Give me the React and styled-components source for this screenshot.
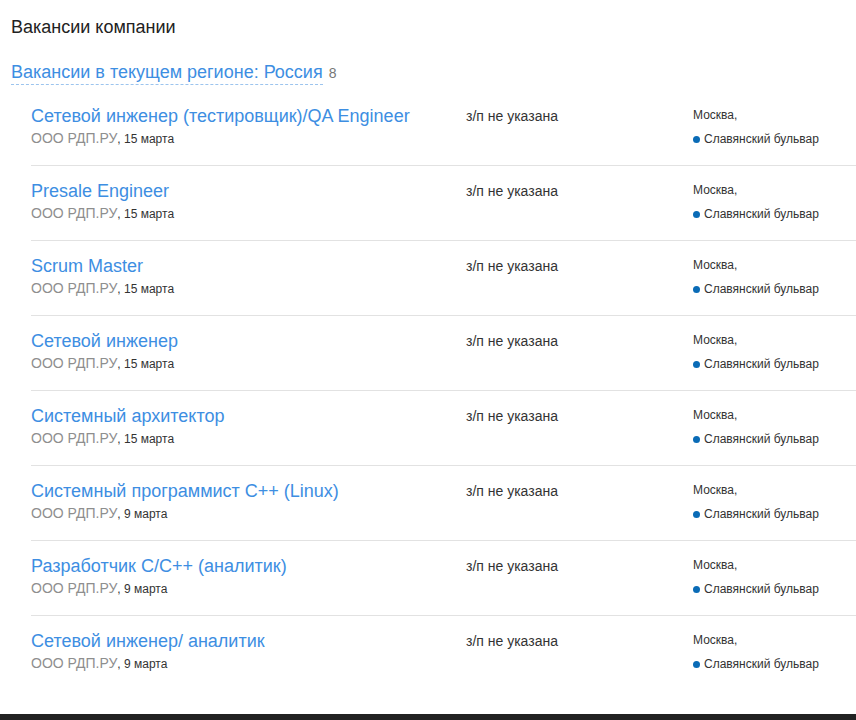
import styled, { createGlobalStyle } from 'styled-components';

const GlobalStyle = createGlobalStyle`
  body {
    margin: 0;
    background: #fff;
    font-family: "Liberation Sans", Arial, sans-serif;
  }
`

const Page = styled.div`
  padding: 16px 0 0 11px;
`
const Title = styled.h2`
  margin: 0;
  font-size: 18px;
  font-weight: normal;
  line-height: 22px;
  color: #222;
`
const Region = styled.div`
  margin-top: 23px;
  display: flex;
  align-items: baseline;
  gap: 6px;
`
const RegionLink = styled.a`
  font-size: 18px;
  line-height: 23px;
  color: #3d8ee2;
  text-decoration: none;
  border-bottom: 1px dashed #9cc4ee;
  cursor: pointer;
`
const Count = styled.span`
  font-size: 14px;
  color: #777;
`
const List = styled.div`
  margin: 6px 0 0 20px;
`
const Row = styled.div`
  display: flex;
  padding: 13px 0 17px;
  border-top: ${p => (p.first ? 'none' : '1px solid #e2e2e2')};
`
const Main = styled.div`
  width: 435px;
`
const JobLink = styled.a`
  display: block;
  font-size: 18px;
  line-height: 24px;
  color: #3d8ee2;
  text-decoration: none;
`
const Meta = styled.div`
  margin-top: 1px;
  line-height: 18px;
`
const Company = styled.span`
  font-size: 14px;
  color: #8e8e8e;
`
const Date = styled.span`
  font-size: 12px;
  color: #333;
`
const Salary = styled.div`
  width: 227px;
  font-size: 14px;
  line-height: 24px;
  color: #333;
`
const Location = styled.div`
  font-size: 12px;
  color: #333;
`
const City = styled.div`
  line-height: 22px;
`
const Metro = styled.div`
  display: flex;
  align-items: center;
  gap: 4px;
  line-height: 18px;
  margin-top: 4px;
`
const Dot = styled.span`
  width: 7px;
  height: 7px;
  border-radius: 50%;
  background: #0a6bb6;
`
const Footer = styled.div`
  margin-top: 24px;
  height: 40px;
  background: #222;
`

const jobs = [
  ['Сетевой инженер (тестировщик)/QA Engineer', '15 марта'],
  ['Presale Engineer', '15 марта'],
  ['Scrum Master', '15 марта'],
  ['Сетевой инженер', '15 марта'],
  ['Системный архитектор', '15 марта'],
  ['Системный программист C++ (Linux)', '9 марта'],
  ['Разработчик C/C++ (аналитик)', '9 марта'],
  ['Сетевой инженер/ аналитик', '9 марта'],
]

export default function App() {
  return <>
    <GlobalStyle />
    <Page>
      <Title>Вакансии компании</Title>
      <Region>
        <RegionLink>Вакансии в текущем регионе: Россия</RegionLink>
        <Count>8</Count>
      </Region>
      <List>
        {jobs.map(([name, date], i) => (
          <Row key={i} first={i === 0}>
            <Main>
              <JobLink href="#">{name}</JobLink>
              <Meta>
                <Company>ООО РДП.РУ</Company><Date>, {date}</Date>
              </Meta>
            </Main>
            <Salary>з/п не указана</Salary>
            <Location>
              <City>Москва,</City>
              <Metro><Dot />Славянский бульвар</Metro>
            </Location>
          </Row>
        ))}
      </List>
    </Page>
    <Footer />
  </>
}
